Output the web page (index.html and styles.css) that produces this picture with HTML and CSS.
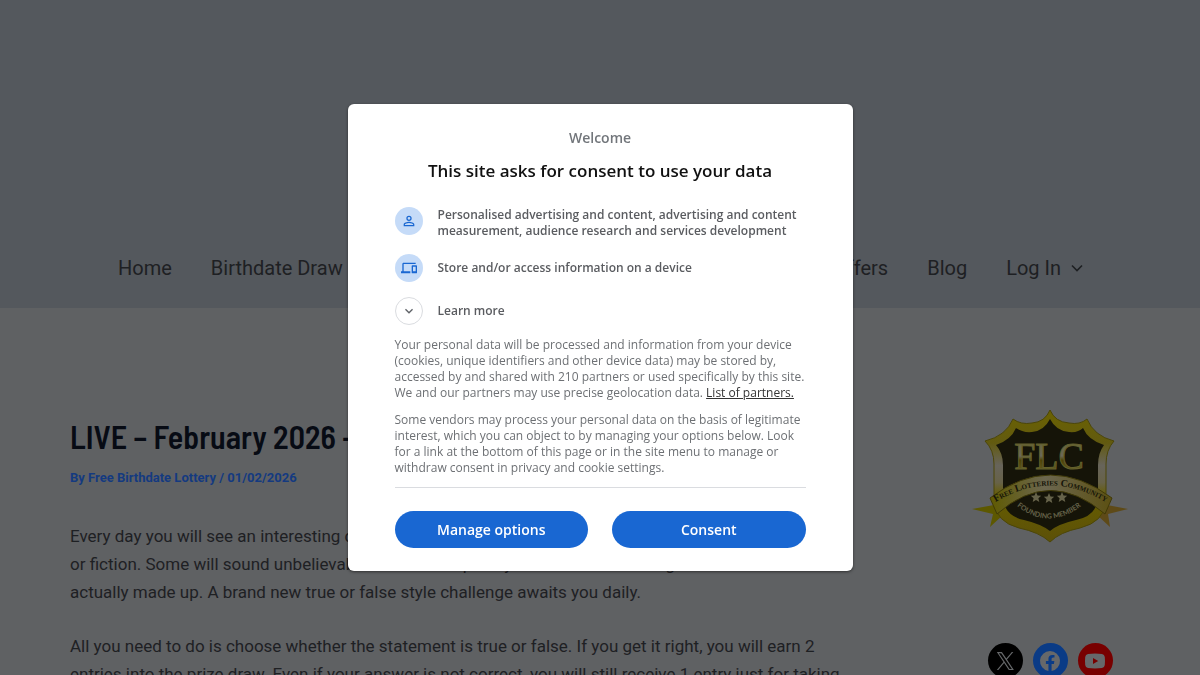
FILE: index.html
```html
<!DOCTYPE html>
<html lang="en">
  <head>
    <meta charset="UTF-8" />
    <meta name="viewport" content="width=device-width, initial-scale=1.0" />
    <title>LIVE – February 2026</title>
    <link rel="stylesheet" href="styles.css">
  </head>
  <body>
    <header class="site-header">
      <nav class="main-nav">
        <div class="nav-group">
          <a href="#">Home</a>
          <a href="#">Birthdate Draw</a>
        </div>
        <div class="nav-group">
          <a href="#">Offers</a>
          <a href="#">Blog</a>
          <a href="#" class="has-menu">Log In
            <svg width="12" height="8" viewBox="0 0 12 8"><path d="M1 1.5l5 5 5-5" fill="none" stroke="currentColor" stroke-width="1.6"/></svg>
          </a>
        </div>
      </nav>
    </header>

    <div class="container">
      <main class="post">
        <h1>LIVE – February 2026 –</h1>
        <p class="meta"><a href="#">By Free Birthdate Lottery</a> / 01/02/2026</p>
        <p>Every day you will see an interesting claim. You must decide if it is fact<br>or fiction. Some will sound unbelievable but are completely true while others might be<br>actually made up. A brand new true or false style challenge awaits you daily.</p>
        <p>All you need to do is choose whether the statement is true or false. If you get it right, you will earn 2 entries into the prize draw. Even if your answer is not correct, you will still receive 1 entry just for taking part.</p>
      </main>

      <aside class="sidebar">
        <svg class="badge" width="156" height="136" viewBox="0 0 156 136" role="img" aria-label="Free Lotteries Community founding member">
          <defs>
            <linearGradient id="gold" x1="0" y1="0" x2="0" y2="1">
              <stop offset="0" stop-color="#6b6200"/>
              <stop offset=".25" stop-color="#625a10"/>
              <stop offset=".42" stop-color="#67645a"/>
              <stop offset=".55" stop-color="#676248"/>
              <stop offset=".65" stop-color="#665d00"/>
              <stop offset="1" stop-color="#5c5008"/>
            </linearGradient>
            <linearGradient id="letters" x1="0" y1="0" x2="0" y2="1">
              <stop offset="0" stop-color="#63602c"/>
              <stop offset=".5" stop-color="#6b6858"/>
              <stop offset=".6" stop-color="#4d4308"/>
              <stop offset="1" stop-color="#6b6430"/>
            </linearGradient>
            <linearGradient id="band" x1="0" y1="0" x2="1" y2="0">
              <stop offset="0" stop-color="#5f5a00"/>
              <stop offset=".45" stop-color="#6c6750"/>
              <stop offset="1" stop-color="#5c5012"/>
            </linearGradient>
            <path id="band-arc" d="M22 95Q78 60 135 95"/>
            <path id="member-arc" d="M34 88Q77 133 120 88"/>
          </defs>
          <path d="M0 101L22 97L32 106L18 119L21 106z" fill="#5d5800"/>
          <path d="M156 101L135 97L124 106L138 119L136 106z" fill="#5e4a18"/>
          <path d="M78 2Q83 14 97 15Q108 17 115 11Q122 28 142 33Q134 42 134 56L134 94Q132 114 108 120Q88 124 78 134Q67 124 47 120Q24 114 22 94L22 56Q22 42 13 33Q34 28 41 11Q49 17 60 15Q73 14 78 2z" fill="url(#gold)" stroke="#4c4608"/>
          <path d="M78 11Q84 23 97 24Q106 25 111 20Q116 32 132 37Q126 45 126 57L126 91Q124 108 104 112Q86 116 78 123Q69 116 52 112Q33 108 31 91L31 57Q31 45 24 37Q39 32 44 20Q51 25 60 24Q72 23 78 11z" fill="#151408"/>
          <text x="77" y="61" text-anchor="middle" class="badge-letters" fill="url(#letters)">FLC</text>
          <path d="M18 90Q78 44 140 90L133 106Q78 59 25 106z" fill="url(#band)" stroke="#403a08"/>
          <text class="badge-band"><textPath href="#band-arc" startOffset="50%" text-anchor="middle">Free Lotteries Community</textPath></text>
          <text class="badge-member"><textPath href="#member-arc" startOffset="50%" text-anchor="middle">FOUNDING MEMBER</textPath></text>
          <path id="star" d="M77 85l1.500 3.400 3.700.3-2.800 2.500.9 3.700-3.300-2-3.300 2 .9-3.700-2.800-2.500 3.700-.3z" fill="#66634a"/>
          <use href="#star" x="-13" y="-1"/>
          <use href="#star" x="13" y="-1"/>
        </svg>
        <div class="social">
          <a href="#" class="x" aria-label="X">
            <svg width="24" height="24" viewBox="0 0 24 24"><path d="M13.98 10.62 20.34 3h-1.5l-5.53 6.62L8.9 3H3.8l6.67 10.01L3.8 21h1.5l5.84-6.98L15.8 21h5.1zm-2.07 2.47-.67-.99L5.85 4.16h2.32l4.34 6.4.68 1 5.65 8.32h-2.32z" fill="currentColor"/></svg>
          </a>
          <a href="#" class="facebook" aria-label="Facebook">
            <svg width="24" height="24" viewBox="0 0 24 24"><path d="M12 2a10 10 0 0 0-1.56 19.88v-6.99H7.9V12h2.54V9.8c0-2.5 1.49-3.89 3.78-3.89 1.09 0 2.24.2 2.24.2v2.46H15.2c-1.24 0-1.63.77-1.63 1.56V12h2.78l-.45 2.89h-2.33v6.99A10 10 0 0 0 12 2z" fill="currentColor"/></svg>
          </a>
          <a href="#" class="youtube" aria-label="YouTube">
            <svg width="24" height="24" viewBox="0 0 24 24"><path d="M5 5Q12 4.200 19 5Q21.500 5.300 21.800 8Q22.200 12 21.800 16Q21.500 18.700 19 19Q12 19.800 5 19Q2.500 18.700 2.200 16Q1.800 12 2.200 8Q2.500 5.300 5 5zM10 9v6l5.200-3z" fill="currentColor" fill-rule="evenodd"/></svg>
          </a>
        </div>
      </aside>
    </div>

    <div class="overlay">
      <div class="dialog" role="dialog" aria-labelledby="dialog-title">
        <p class="welcome">Welcome</p>
        <h2 id="dialog-title">This site asks for consent to use your data</h2>
        <ul class="purposes">
          <li>
            <span class="icon">
              <svg width="16" height="16" viewBox="0 0 24 24"><path d="M12 5.900a2.100 2.100 0 1 1 0 4.200 2.100 2.100 0 0 1 0-4.200m0 9c2.970 0 6.100 1.460 6.100 2.100v1.100H5.900V17c0-.64 3.130-2.100 6.100-2.100M12 4a4 4 0 1 0 0 8 4 4 0 0 0 0-8zm0 9c-2.670 0-8 1.340-8 4v3h16v-3c0-2.660-5.330-4-8-4z" fill="currentColor"/></svg>
            </span>
            <span>Personalised advertising and content, advertising and content measurement, audience research and services development</span>
          </li>
          <li>
            <span class="icon">
              <svg width="16" height="16" viewBox="0 0 24 24"><path d="M4 6h18V4H4c-1.100 0-2 .9-2 2v11H0v3h14v-3H4V6zm19 2h-6c-.55 0-1 .45-1 1v10c0 .55.45 1 1 1h6c.55 0 1-.45 1-1V9c0-.55-.45-1-1-1zm-1 9h-4v-7h4v7z" fill="currentColor"/></svg>
            </span>
            <span>Store and/or access information on a device</span>
          </li>
          <li>
            <button class="icon expand" aria-label="Expand" aria-describedby="learn-more">
              <svg width="16" height="16" viewBox="0 0 24 24"><path d="M16.590 8.590 12 13.170 7.410 8.590 6 10l6 6 6-6z" fill="currentColor"/></svg>
            </button>
            <span id="learn-more">Learn more</span>
          </li>
        </ul>
        <p class="details">Your personal data will be processed and information from your device (cookies, unique identifiers and other device data) may be stored by, accessed by and shared with 210 partners or used specifically by this site. We and our partners may use precise geolocation data. <a href="#">List of partners.</a></p>
        <p class="details">Some vendors may process your personal data on the basis of legitimate interest, which you can object to by managing your options below. Look for a link at the bottom of this page or in the site menu to manage or withdraw consent in privacy and cookie settings.</p>
        <div class="actions">
          <button>Manage options</button>
          <button>Consent</button>
        </div>
      </div>
    </div>
  </body>
</html>
```
FILE: styles.css
```css
* {
  box-sizing: border-box;
}
body {
  margin: 0;
  height: 100vh;
  overflow: hidden;
  font-family: Roboto, sans-serif;
  font-size: 17px;
  line-height: 28px;
  color: #1e2023;
  background: #5f6163;
}
a {
  color: inherit;
  text-decoration: none;
}
.site-header {
  padding: 228px 117px 0 118px;
  background: #54585d;
}
.main-nav {
  display: flex;
  justify-content: space-between;
  height: 80px;
  align-items: center;
  font-size: 20px;
}
.nav-group {
  display: flex;
  gap: 39px;
}
.has-menu {
  display: flex;
  align-items: center;
  gap: 10px;
}
.container {
  display: flex;
  justify-content: space-between;
  padding: 100px 70px 0;
}
.post {
  flex: 0 1 770px;
}
.post h1 {
  margin: 10px 0 16px;
  font-family: "Barlow Semi Condensed", "Roboto Condensed", Roboto, sans-serif;
  font-size: 32px;
  font-weight: 600;
  line-height: 36px;
  font-stretch: condensed;
  color: #070b14;
}
.post p {
  margin: 0 0 26px;
}
.post .meta {
  margin-bottom: 36px;
  font-size: 13px;
  font-weight: 700;
  line-height: 16px;
  color: #143a80;
}
.sidebar {
  display: flex;
  flex-direction: column;
  align-items: center;
  gap: 99px;
  width: 160px;
}
.badge-letters {
  font: 38px "Liberation Serif", serif;
  stroke: #63602c;
  stroke-width: 1;
}
.badge-band {
  font: 700 10px "Liberation Serif", serif;
  font-variant: small-caps;
  fill: #151408;
}
.badge-member {
  font: 700 7px Lato, sans-serif;
  fill: #66634a;
}
.social {
  display: flex;
  gap: 10px;
}
.social a {
  display: flex;
  align-items: center;
  justify-content: center;
  width: 35px;
  height: 35px;
  border-radius: 50%;
  color: #66686a;
}
.social .x {
  background: #000;
}
.social .facebook {
  background: #0a3b86;
}
.social .youtube {
  background: #780000;
}

/* consent dialog */
.overlay {
  position: fixed;
  inset: 0;
  display: flex;
  align-items: center;
  justify-content: center;
  font-family: "Open Sans", sans-serif;
}
.dialog {
  width: 505px;
  padding: 24px 47px 23px;
  border-radius: 6px;
  background: #fff;
  box-shadow: 0 1px 3px rgba(0, 0, 0, 0.5);
}
.welcome {
  margin: 0;
  font-size: 14px;
  font-weight: 600;
  line-height: 20px;
  text-align: center;
  color: #72767b;
}
.dialog h2 {
  margin: 11px 0 24px;
  font-size: 17px;
  font-weight: 600;
  line-height: 24px;
  text-align: center;
  color: #111;
}
.purposes {
  display: flex;
  flex-direction: column;
  gap: 15px;
  margin: 0 0 12px;
  padding: 0;
  list-style: none;
  font-size: 12px;
  font-weight: 600;
  line-height: 16px;
  color: #5a5c60;
}
.purposes li {
  display: flex;
  gap: 15px;
}
.purposes li > span:last-child {
  align-self: center;
}
.icon {
  display: flex;
  flex: none;
  align-items: center;
  justify-content: center;
  width: 28px;
  height: 28px;
  border-radius: 50%;
  color: #1967d2;
  background: #c5dbf8;
}
.expand {
  padding: 0;
  border: 1px solid #dadce0;
  color: #5f6368;
  background: #fff;
}
.details {
  margin: 0 0 11px;
  font-size: 12px;
  line-height: 16px;
  color: #6d7074;
}
.details a {
  color: #333;
  text-decoration: underline;
}
.actions {
  display: flex;
  gap: 24px;
  padding-top: 23px;
  border-top: 1px solid #dadce0;
}
.actions button {
  flex: 1;
  height: 37px;
  border: 0;
  border-radius: 19px;
  font: 600 14px "Open Sans", sans-serif;
  color: #fff;
  background: #1967d2;
}
```
